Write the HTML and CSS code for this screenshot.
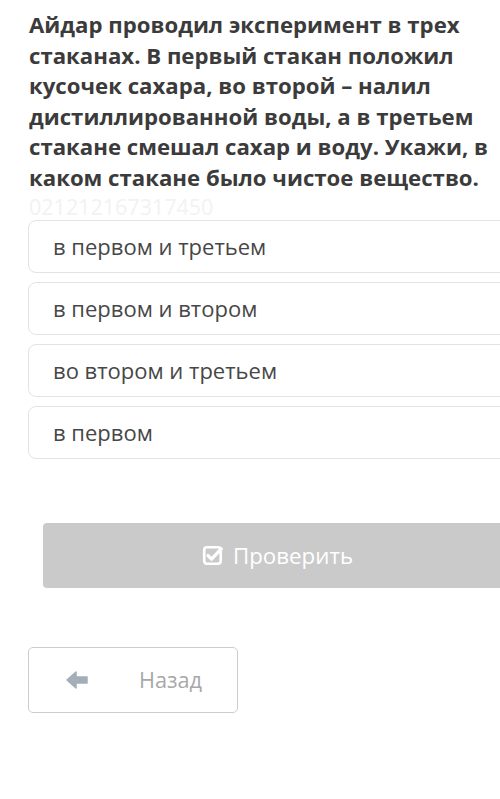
FILE: index.html
```html
<!DOCTYPE html>
<html lang="ru">
<head>
<meta charset="utf-8">
<link rel="stylesheet" href="styles.css">
</head>
<body>
<div class="page">
  <div class="question">Айдар проводил эксперимент в трех стаканах. В первый стакан положил кусочек сахара, во второй – налил дистиллированной воды, а в третьем стакане смешал сахар и воду. Укажи, в каком стакане было чистое вещество.</div>
  <div class="code">021212167317450</div>
  <div class="options">
    <div class="option">в первом и третьем</div>
    <div class="option">в первом и втором</div>
    <div class="option">во втором и третьем</div>
    <div class="option">в первом</div>
  </div>
  <div class="check">
    <svg class="check-icon" width="22" height="22" viewBox="0 0 20 20"><rect x="2" y="3" width="15" height="15" rx="2.5" fill="none" stroke="#fff" stroke-width="2.4"/><path d="M5.5 10.5l3.2 3.2L17.5 4.5" fill="none" stroke="#fff" stroke-width="3" stroke-linecap="round" stroke-linejoin="round"/></svg>
    <span>Проверить</span>
  </div>
  <div class="back">
    <svg class="arrow" width="24" height="20" viewBox="0 0 24 20"><path d="M2 10L11 2v5h11v6H11v5z" fill="#a3aeb8" stroke="#a3aeb8" stroke-width="1.5" stroke-linejoin="round"/></svg>
    <span>Назад</span>
  </div>
</div>
</body>
</html>
```
FILE: styles.css
```css
html, body {
  margin: 0;
  padding: 0;
  background: #fff;
  overflow: hidden;
}
.page {
  width: 540px;
  padding: 10px 0 0 29px;
  font-family: "Open Sans", "Liberation Sans", sans-serif;
}
.question {
  width: 462px;
  font-size: 22.2px;
  font-weight: 700;
  line-height: 30.6px;
  color: #3b3b3b;
}
.code {
  font-size: 21.5px;
  line-height: 26px;
  color: #f2f2f2;
  height: 26px;
}
.options {
  display: flex;
  flex-direction: column;
  gap: 9px;
  margin-left: -1px;
}
.option {
  box-sizing: border-box;
  height: 53px;
  border: 1px solid #e3e3e3;
  border-radius: 8px;
  padding-left: 24px;
  display: flex;
  align-items: center;
  font-size: 22px;
  color: #474747;
}
.check {
  margin: 64px 0 0 14px;
  width: 469px;
  height: 65px;
  background: #cacaca;
  border-radius: 4px;
  display: flex;
  align-items: center;
  justify-content: center;
  gap: 9px;
  color: #fff;
  font-size: 22.3px;
}
.back {
  box-sizing: border-box;
  margin: 59px 0 0 -1px;
  width: 210px;
  height: 66px;
  border: 1.5px solid #cdcdcd;
  border-radius: 5px;
  display: flex;
  align-items: center;
  color: #a8a8a8;
  font-size: 21.7px;
}
.arrow { margin-left: 36px; margin-right: 50px; }
```
